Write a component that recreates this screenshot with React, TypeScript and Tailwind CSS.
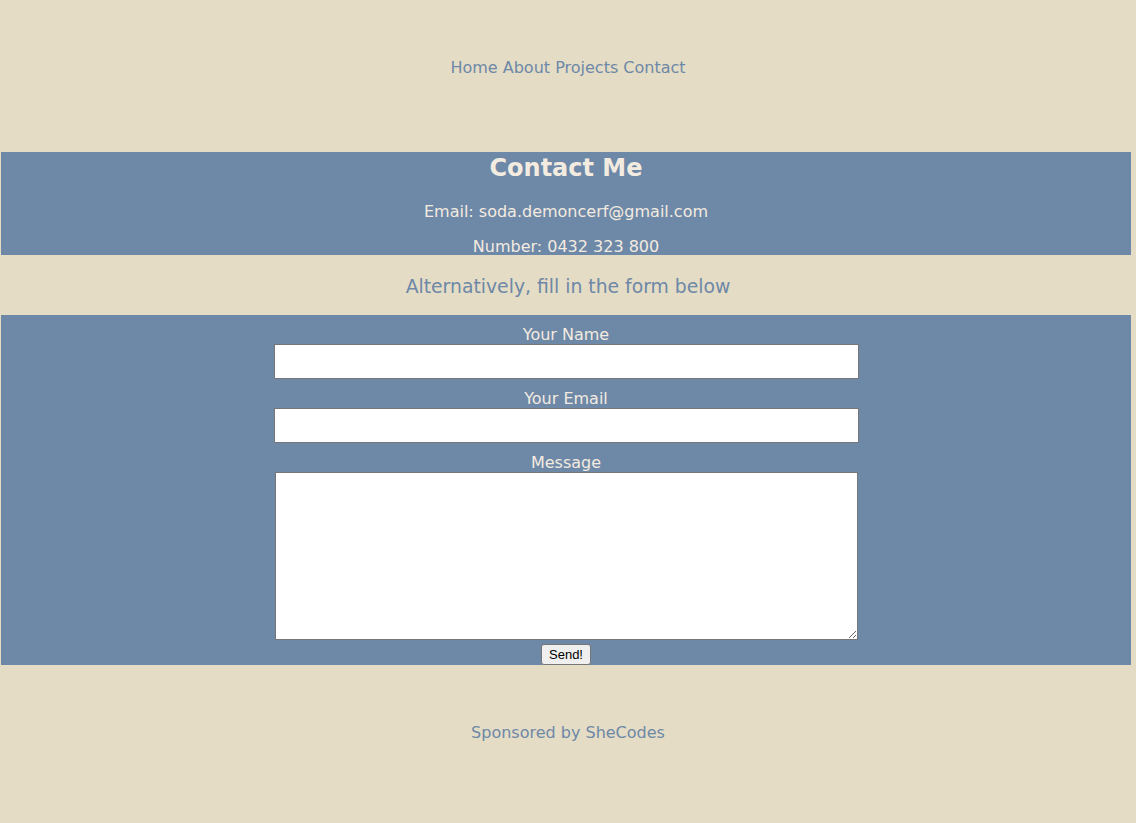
export default function App() {
  return (
    <div
      className="min-h-[823px] w-full bg-[#e4dcc5] text-center"
      style={{ fontFamily: '"DejaVu Sans", Verdana, sans-serif' }}
    >
      <nav className="pt-[58px] text-[16px] leading-[20px] text-[#6e88a7]">
        <a href="#">Home</a> <a href="#">About</a> <a href="#">Projects</a>{' '}
        <a href="#">Contact</a>
      </nav>

      <section className="ml-[1px] mt-[74px] w-[1130px] bg-[#6e88a7] pt-[2px] text-[#f3ebe0]">
        <h1 className="text-[24px] font-bold leading-[28px]">Contact Me</h1>
        <p className="mt-[20px] text-[16px] leading-[20px]">Email: soda.demoncerf@gmail.com</p>
        <p className="mt-[17px] text-[16px] leading-[16px]">Number: 0432 323 800</p>
      </section>

      <p className="mt-[21px] text-[18.8px] leading-[22px] text-[#6e88a7]">
        Alternatively, fill in the form below
      </p>

      <form className="ml-[1px] mt-[17px] flex w-[1130px] flex-col items-center bg-[#6e88a7] pt-[11px] text-[16px] text-[#f3ebe0]">
        <label className="leading-[18px]">Your Name</label>
        <input
          type="text"
          className="h-[35px] w-[585px] border border-[#767676] bg-white"
        />
        <label className="mt-[11px] leading-[18px]">Your Email</label>
        <input
          type="email"
          className="h-[35px] w-[585px] border border-[#767676] bg-white"
        />
        <label className="mt-[11px] leading-[18px]">Message</label>
        <textarea className="h-[168px] w-[583px] border border-[#767676] bg-white" />
        <button
          type="button"
          className="mt-[4px] h-[21px] rounded-[3px] border border-[#767676] bg-[#efefef] px-[7px] text-[13px] leading-[15px] text-black"
          style={{ fontFamily: '"Liberation Sans", Arial, sans-serif' }}
        >
          Send!
        </button>
      </form>

      <footer className="pt-[58px] text-[16px] leading-[20px] text-[#6e88a7]">
        Sponsored by SheCodes
      </footer>
    </div>
  )
}
